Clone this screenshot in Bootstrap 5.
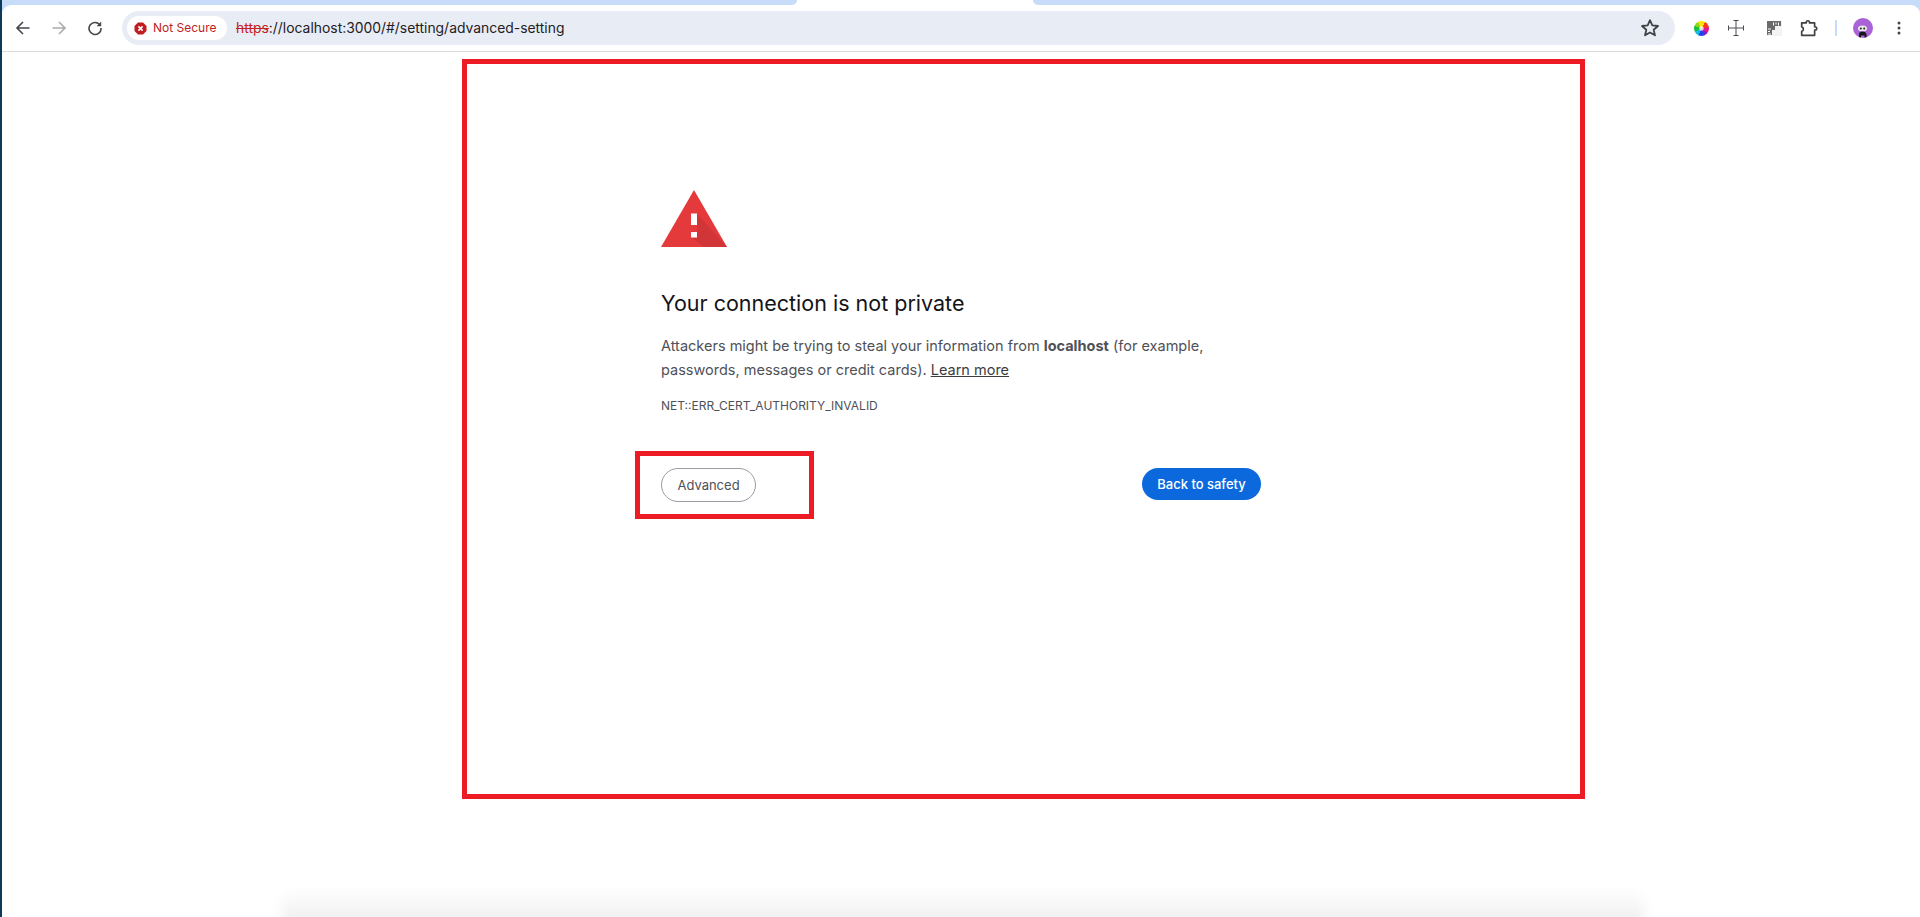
<!DOCTYPE html>
<html lang="en">
<head>
<meta charset="utf-8">
<title>Privacy error</title>
<link href="https://cdn.jsdelivr.net/npm/bootstrap@5.3.0/dist/css/bootstrap.min.css" rel="stylesheet">
<style>
html,body{height:100%;margin:0;overflow:hidden;background:#fff;font-family:Inter,Roboto,"Liberation Sans",sans-serif}
.edge-strip{width:2px;background:#0b3a5b;flex:none}
.browser-head{background:#c7dcf8;flex:none}
.tab-strip{height:5px;background:#fff}
.tab-left{width:795px;background:#c7dcf8;border-bottom-right-radius:6px}
.tab-active{width:236px}
.tab-right{background:#c7dcf8;border-bottom-left-radius:6px}
.tool-row{height:47px;background:#fff;border-top-left-radius:9px;border-top-right-radius:9px;border-bottom:1px solid #dcdcdc}
.slot{flex:none;display:flex;align-items:center;justify-content:center;height:46px}
.w24{width:24px}.w30{width:30px}.w34{width:34px}.w36{width:36px}.w40{width:40px}.w42{width:42px}
.omni{height:34px;margin:0 9px 0 6px;background:#e8ecf5;border-radius:17px;padding:0 15px 0 5px;color:#1f2023;font-size:13.900px}
.chip{width:100px;height:24px;background:#fff;border-radius:12px;padding-left:7px;margin-right:9px;gap:6px;color:#bf1d22;font-size:12px;white-space:nowrap}
.scheme{color:#c5221f;text-decoration:line-through}
.wheel{width:15px;height:15px;border-radius:50%;background:radial-gradient(circle,rgba(255,255,255,.75) 0 1.5px,transparent 3px),conic-gradient(#ffe600 0 30deg,#f7381f 30deg 80deg,#e0149a 80deg 125deg,#7a1fd0 125deg 165deg,#1f43e8 165deg 205deg,#18b7e0 205deg 245deg,#17c23a 245deg 290deg,#8fd51c 290deg 330deg,#ffe600 330deg)}
.toolbar-sep{width:2px;height:16px;background:#c7dcf8}
.avatar{width:20px;height:20px;border-radius:50%;background:#a963d6;overflow:hidden}
.shot-frame{width:1123px;height:740px;margin:7px 0 0 460px;border:5px solid #ed1c24;padding:126px 0 0 194px;flex:none}
.warn-col{width:600px}
.warn-title{font-size:21.500px;font-weight:400;line-height:30px;color:#131417;margin:41px 0 0}
.warn-body{font-size:14.500px;line-height:24px;color:#4f5158;margin:16px 0 0}
.warn-body strong{font-weight:700}
.warn-body a{color:#3c3d42}
.warn-code{font-size:12px;line-height:16px;color:#4f5158;margin:16px 0 0;text-transform:uppercase}
.warn-actions{margin-top:54px}
.adv-wrap{display:block}
.btn-adv{height:34px;width:95px;padding:1px 0 0;font-size:13px;color:#4f5158;background:#fff;border:1px solid #9a9ca3;border-radius:17px}
.btn-safe{height:32px;width:119px;padding:1px 0 0;font-size:13px;font-weight:500;color:#fff;background:#0b69dd;border:0;border-radius:16px}
.adv-frame{position:absolute;left:-26px;top:-17px;width:179px;height:68px;border:5px solid #ed1c24;pointer-events:none}
.page-shadow{height:38px;margin:0 276px -10px 280px;background:linear-gradient(to bottom,rgba(238,238,238,0),#eeeeee 85%);border-radius:14px 14px 0 0;filter:blur(6px)}
</style>
</head>
<body>
<div class="d-flex h-100">
  <div class="edge-strip"></div>
  <div class="d-flex flex-column flex-grow-1 h-100">
    <header class="browser-head">
      <div class="tab-strip d-flex">
        <div class="tab-left"></div>
        <div class="tab-active"></div>
        <div class="tab-right flex-grow-1"></div>
      </div>
      <div class="tool-row d-flex align-items-center">
        <div class="slot w42">
          <svg width="16" height="16" viewBox="0 0 16 16" fill="none" stroke="#45474b" stroke-width="1.6"><path d="M14.500 8H2M8 2 2 8l6 6"/></svg>
        </div>
        <div class="slot w30">
          <svg width="16" height="16" viewBox="0 0 16 16" fill="none" stroke="#a9abad" stroke-width="1.6"><path d="M1.500 8H14M8 2l6 6-6 6"/></svg>
        </div>
        <div class="slot w42">
          <svg width="16" height="16" viewBox="0 0 16 16" fill="none" stroke="#45474b" stroke-width="1.6"><path d="M13.200 5.500A6 6 0 1 0 14 8"/><path d="M14.200 1.600v4.600H9.600z" fill="#45474b" stroke="none"/></svg>
        </div>
        <div class="omni d-flex align-items-center flex-grow-1">
          <div class="chip d-flex align-items-center flex-none">
            <svg width="13" height="13" viewBox="0 0 13 13"><path d="M4 .5h5L12.500 4v5L9 12.500H4L.5 9V4z" fill="#bf1d22"/><path d="M4.400 4.400l4.200 4.200M8.600 4.400 4.400 8.600" stroke="#fff" stroke-width="1.6"/></svg>
            <span>Not Secure</span>
          </div>
          <span class="flex-grow-1"><span class="scheme">https</span>://localhost:3000/#/setting/advanced-setting</span>
          <svg width="20" height="20" viewBox="0 0 18 18" fill="none" stroke="#3f4144" stroke-width="1.6" stroke-linejoin="round"><path d="M9 2l2.100 4.700 5.100.5-3.900 3.400 1.200 5L9 13l-4.500 2.600 1.200-5-3.900-3.400 5.100-.5z"/></svg>
        </div>
        <div class="slot w34"><div class="wheel"></div></div>
        <div class="slot w36">
          <svg width="16" height="16" viewBox="0 0 16 16" fill="none" stroke="#4a4c50" stroke-width="1"><path d="M8 .5v15M.5 8h15M5.500 .5h5M5.500 15.500h5M.5 5.500v5M15.500 5.500v5"/></svg>
        </div>
        <div class="slot w40">
          <svg width="15" height="15" viewBox="0 0 15 15"><rect width="15" height="15" fill="#f4f4f4"/><path d="M0 0h14v5H8v4H5v5H0z" fill="#6b6b6d"/><path d="M6.500 1.500v3M9 1.500v2M11.500 1.500v3M1 8h3M1 10.500h2M1 13h3" stroke="#fff" stroke-width="1"/></svg>
        </div>
        <div class="slot w30">
          <svg width="18" height="18" viewBox="0 0 16 16" fill="none" stroke="#3f4144" stroke-width="1.500" stroke-linejoin="round"><path d="M1.500 3.500h4c0-2.600 3-2.600 3 0h4.500v3.400c2.500 0 2.500 3 0 3v4.600H1.500v-3.500c2-.3 2-3.700 0-4z"/></svg>
        </div>
        <div class="slot w24"><div class="toolbar-sep"></div></div>
        <div class="slot w30">
          <div class="avatar">
            <svg width="20" height="20" viewBox="0 0 20 20"><ellipse cx="9.500" cy="6.500" rx="4.500" ry="3" fill="#e9e9e9"/><circle cx="7.800" cy="6.500" r="1" fill="#222"/><circle cx="11.200" cy="6.500" r="1" fill="#222"/><path d="M6 17v-4.500Q6 9.500 9.500 9.500T13.500 12.500V17h-2v-3.500h-3.500V17z" fill="#17171a"/></svg>
          </div>
        </div>
        <div class="slot w42">
          <svg width="4" height="14" viewBox="0 0 4 14" fill="#45474b"><circle cx="2" cy="2" r="1.500"/><circle cx="2" cy="7" r="1.500"/><circle cx="2" cy="12" r="1.500"/></svg>
        </div>
      </div>
    </header>

    <main class="shot-frame">
      <div class="warn-col">
        <svg class="d-block" width="66" height="57" viewBox="0 0 66 57">
          <path d="M33 0 66 57H0z" fill="#e53a3c"/>
          <path d="M36 23.500 66 57H44L30 47.500 36 42z" fill="#d23537"/>
          <path d="M30 23.500h6V35h-6zM30 42h6v5.500h-6z" fill="#fff"/>
        </svg>
        <h1 class="warn-title">Your connection is not private</h1>
        <p class="warn-body">Attackers might be trying to steal your information from <strong>localhost</strong> (for example, passwords, messages or credit cards). <a href="#">Learn more</a></p>
        <div class="warn-code">NET::ERR_CERT_AUTHORITY_INVALID</div>
        <div class="warn-actions d-flex justify-content-between align-items-start">
          <div class="position-relative adv-wrap">
            <button type="button" class="btn btn-adv">Advanced</button>
            <span class="adv-frame"></span>
          </div>
          <button type="button" class="btn btn-safe">Back to safety</button>
        </div>
      </div>
    </main>
    <div class="flex-grow-1"></div>
    <div class="page-shadow"></div>
  </div>
</div>
<script src="https://cdn.jsdelivr.net/npm/bootstrap@5.3.0/dist/js/bootstrap.bundle.min.js"></script>
</body>
</html>
